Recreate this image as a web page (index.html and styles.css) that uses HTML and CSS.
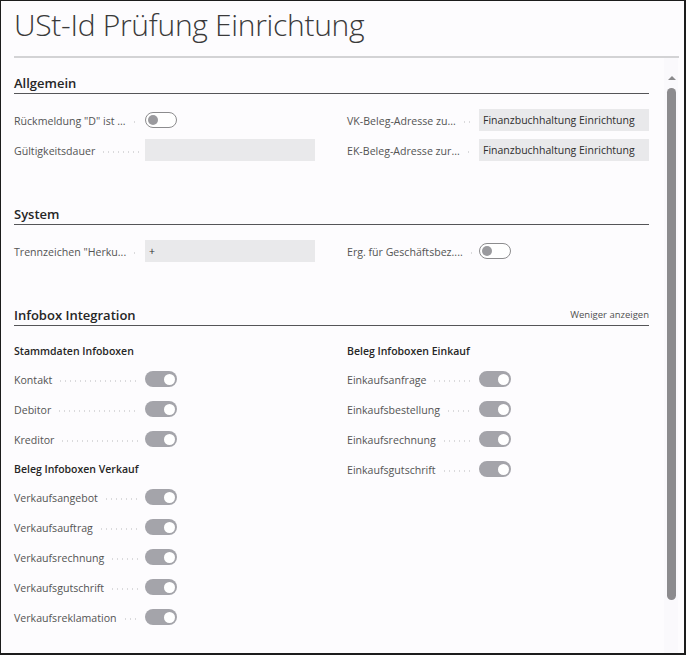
FILE: index.html
```html
<!DOCTYPE html>
<html lang="de">
<head>
<meta charset="utf-8">
<title>USt-Id Prüfung Einrichtung</title>
<link rel="stylesheet" href="styles.css">
</head>
<body>
<div class="window">
  <header class="page-head">
    <h1 class="page-title">USt-Id Prüfung Einrichtung</h1>
  </header>
  <div class="divider"></div>
  <div class="body">
    <main class="content">
      <section class="group group-first">
        <div class="group-head"><h2>Allgemein</h2></div>
        <div class="cols">
          <div class="col">
            <div class="row"><span class="label"><span class="label-text">Rückmeldung "D" ist ...</span><span class="dots"></span></span><span class="toggle off"><span class="knob"></span></span></div>
            <div class="row"><span class="label"><span class="label-text">Gültigkeitsdauer</span><span class="dots"></span></span><span class="field"></span></div>
          </div>
          <div class="col">
            <div class="row"><span class="label"><span class="label-text">VK-Beleg-Adresse zu...</span><span class="dots"></span></span><span class="field">Finanzbuchhaltung Einrichtung</span></div>
            <div class="row"><span class="label"><span class="label-text">EK-Beleg-Adresse zur...</span><span class="dots"></span></span><span class="field">Finanzbuchhaltung Einrichtung</span></div>
          </div>
        </div>
      </section>

      <section class="group">
        <div class="group-head"><h2>System</h2></div>
        <div class="cols">
          <div class="col">
            <div class="row"><span class="label"><span class="label-text">Trennzeichen "Herku...</span><span class="dots"></span></span><span class="field">+</span></div>
          </div>
          <div class="col">
            <div class="row"><span class="label"><span class="label-text">Erg. für Geschäftsbez....</span><span class="dots"></span></span><span class="toggle off"><span class="knob"></span></span></div>
          </div>
        </div>
      </section>

      <section class="group">
        <div class="group-head"><h2>Infobox Integration</h2><span class="less">Weniger anzeigen</span></div>
        <div class="cols cols-tight">
          <div class="col">
            <div class="subhead">Stammdaten Infoboxen</div>
            <div class="row"><span class="label"><span class="label-text">Kontakt</span><span class="dots"></span></span><span class="toggle on"><span class="knob"></span></span></div>
            <div class="row"><span class="label"><span class="label-text">Debitor</span><span class="dots"></span></span><span class="toggle on"><span class="knob"></span></span></div>
            <div class="row"><span class="label"><span class="label-text">Kreditor</span><span class="dots"></span></span><span class="toggle on"><span class="knob"></span></span></div>
            <div class="subhead">Beleg Infoboxen Verkauf</div>
            <div class="row"><span class="label"><span class="label-text">Verkaufsangebot</span><span class="dots"></span></span><span class="toggle on"><span class="knob"></span></span></div>
            <div class="row"><span class="label"><span class="label-text">Verkaufsauftrag</span><span class="dots"></span></span><span class="toggle on"><span class="knob"></span></span></div>
            <div class="row"><span class="label"><span class="label-text">Verkaufsrechnung</span><span class="dots"></span></span><span class="toggle on"><span class="knob"></span></span></div>
            <div class="row"><span class="label"><span class="label-text">Verkaufsgutschrift</span><span class="dots"></span></span><span class="toggle on"><span class="knob"></span></span></div>
            <div class="row"><span class="label"><span class="label-text">Verkaufsreklamation</span><span class="dots"></span></span><span class="toggle on"><span class="knob"></span></span></div>
          </div>
          <div class="col">
            <div class="subhead">Beleg Infoboxen Einkauf</div>
            <div class="row"><span class="label"><span class="label-text">Einkaufsanfrage</span><span class="dots"></span></span><span class="toggle on"><span class="knob"></span></span></div>
            <div class="row"><span class="label"><span class="label-text">Einkaufsbestellung</span><span class="dots"></span></span><span class="toggle on"><span class="knob"></span></span></div>
            <div class="row"><span class="label"><span class="label-text">Einkaufsrechnung</span><span class="dots"></span></span><span class="toggle on"><span class="knob"></span></span></div>
            <div class="row"><span class="label"><span class="label-text">Einkaufsgutschrift</span><span class="dots"></span></span><span class="toggle on"><span class="knob"></span></span></div>
          </div>
        </div>
      </section>
    </main>
    <div class="scrollbar">
      <span class="arrow"></span>
      <span class="thumb"></span>
    </div>
  </div>
</div>
</body>
</html>
```

FILE: styles.css
```css
* { box-sizing: border-box; }

html, body {
  margin: 0;
  padding: 0;
  background: #ffffff;
}

body {
  font-family: "Open Sans", "Noto Sans", "Liberation Sans", sans-serif;
  color: #505050;
}

.window {
  width: 686px;
  height: 655px;
  border: 1px solid #1c1c1c;
  border-right-width: 2px;
  border-bottom-width: 2px;
  background: #fdfcfe;
  display: flex;
  flex-direction: column;
  overflow: hidden;
}

.page-head {
  height: 55px;
  padding: 4px 0 0 13px;
}

.page-title {
  margin: 0;
  font-family: "Open Sans", "Noto Sans", sans-serif;
  font-weight: 300;
  font-size: 30px;
  line-height: 40px;
  letter-spacing: -0.3px;
  color: #3a3a3a;
}

.divider {
  height: 2px;
  margin: 0 5px 0 13px;
  background: #d3d3d5;
}

.body {
  flex: 1;
  display: flex;
  min-height: 0;
}

.content {
  width: 648px;
  padding: 16px 0 0 13px;
}

.group + .group {
  margin-top: 40px;
}

.group-head {
  height: 20px;
  border-bottom: 1px solid #555558;
  display: flex;
  align-items: center;
  justify-content: space-between;
  padding-bottom: 1px;
}

.group-head h2 {
  margin: 0;
  font-size: 13px;
  font-weight: 600;
  color: #262626;
  line-height: 19px;
}

.less {
  font-size: 9.5px;
  color: #505050;
  line-height: 14px;
}

.cols {
  display: grid;
  grid-template-columns: 301px 302px;
  column-gap: 32px;
  padding-top: 11px;
}

.cols-tight {
  padding-top: 10px;
}

.row {
  height: 30px;
  display: grid;
  grid-template-columns: 1fr 170px;
  align-items: center;
}

.label {
  display: flex;
  align-items: center;
  min-width: 0;
  padding-right: 6px;
  padding-top: 1px;
  font-size: 10.6px;
  color: #545454;
  white-space: nowrap;
}

.dots {
  flex: 1;
  height: 2px;
  margin: 2px 0 0 6px;
  background-image: radial-gradient(circle, #dadadc 0.7px, transparent 0.9px);
  background-size: 5px 2px;
  background-repeat: repeat-x;
}

.field {
  height: 22px;
  background: #e9e9eb;
  font-size: 10.5px;
  color: #2e2e2e;
  line-height: 22px;
  padding-left: 4px;
  white-space: nowrap;
}

.toggle {
  width: 32px;
  height: 16px;
  border-radius: 8px;
  display: flex;
  align-items: center;
}

.toggle.off {
  border: 1px solid #8c8c8e;
  background: #ffffff;
  padding-left: 2px;
}

.toggle.off .knob {
  width: 10px;
  height: 10px;
  border-radius: 50%;
  background: #9a9a9e;
}

.toggle.on {
  background: #a4a4aa;
  justify-content: flex-end;
  padding-right: 2px;
}

.toggle.on .knob {
  width: 11px;
  height: 11px;
  border-radius: 50%;
  background: #ffffff;
}

.subhead {
  height: 28px;
  display: flex;
  align-items: center;
  padding-top: 1px;
  font-size: 10.5px;
  font-weight: 600;
  color: #262626;
}

.scrollbar {
  width: 14px;
  margin-left: 15px;
  background: #faf9fc;
  display: flex;
  flex-direction: column;
  align-items: center;
  padding-top: 18px;
}

.arrow {
  width: 0;
  height: 0;
  border-left: 4px solid transparent;
  border-right: 4px solid transparent;
  border-bottom: 4px solid #8a8a8c;
  margin-left: 1px;
}

.thumb {
  margin-top: 8px;
  width: 9px;
  height: 512px;
  border-radius: 5px;
  background: #8c8b8e;
  margin-left: 1px;
}
```
